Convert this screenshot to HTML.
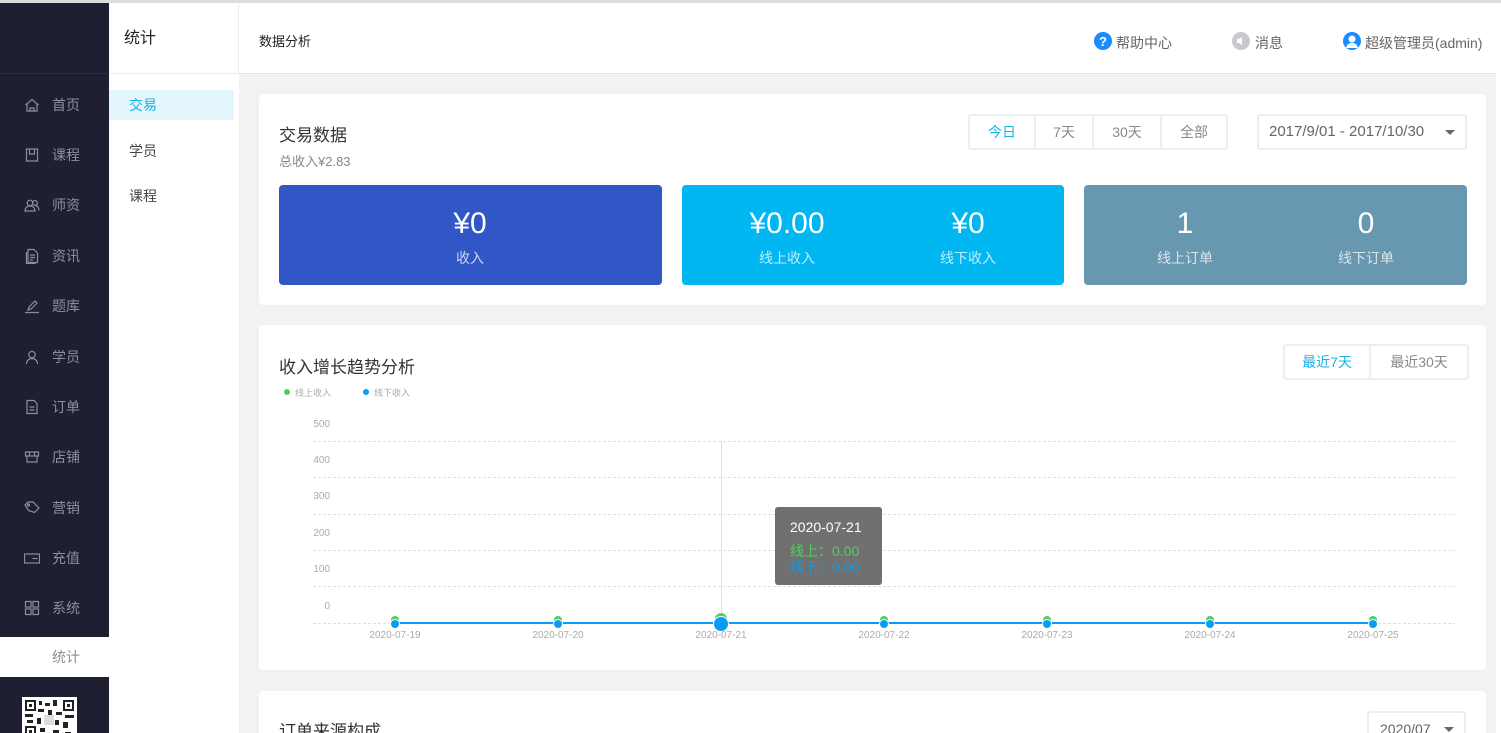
<!DOCTYPE html>
<html><head><meta charset="utf-8"><style>
*{margin:0;padding:0;box-sizing:border-box}
html,body{width:1501px;height:733px;overflow:hidden}
body{background:#f2f2f2;font-family:"Liberation Sans","Noto Sans CJK SC",sans-serif;position:relative;color:#333}
.abs{position:absolute}
.side{left:0;top:3px;width:109px;height:730px;background:#1e1f31}
.side .item{position:absolute;left:0;width:109px;height:20px;color:#8d8f99;font-size:14px}
.side .item svg{position:absolute;left:24px;top:2px}
.side .item span{position:absolute;left:52px;top:0}
.sub{left:109px;top:3px;width:130px;height:730px;background:#fff}
.hdr{left:239px;top:3px;width:1262px;height:71px;background:#fff;border-bottom:1px solid #e3e3e3}
.card{background:#fff;border-radius:4px;position:absolute;left:259px;width:1227px}
.stat{position:absolute;top:185px;height:100px;border-radius:4px;color:#fff;text-align:center}
.stat .v{position:absolute;top:22px;font-size:30px;width:200px;margin-left:-100px}
.stat .l{position:absolute;top:63px;font-size:14px;color:rgba(255,255,255,.75);width:200px;margin-left:-100px}
.btns{position:absolute;display:flex;border:2px solid #eee;border-radius:3px;height:36px}
.btns div{font-size:14px;color:#888;line-height:32px;text-align:center;border-right:2px solid #eee}
.btns div:last-child{border-right:none}
.yl{position:absolute;font-size:10px;color:#aaa;width:30px;text-align:right;left:300px}
.xl{position:absolute;font-size:10px;color:#aaa;top:630px;width:80px;text-align:center}
</style></head><body>
<div class="abs" style="left:0;top:0;width:1501px;height:3px;background:#ddd"></div>
<div class="abs side">
 <div class="abs" style="left:0;top:70px;width:109px;height:1px;background:#2c2d40"></div>
 <div class="item" style="top:92px"><svg width="16" height="16" viewBox="0 0 16 16" fill="none" stroke="#8d8f99" stroke-width="1.2"><path d="M1.5 8L8 2.5l6.5 5.5M3 7v7h10V7M6 14v-3h4v3"/></svg><span>首页</span></div>
 <div class="item" style="top:142px"><svg width="16" height="16" viewBox="0 0 16 16" fill="none" stroke="#8d8f99" stroke-width="1.2"><rect x="2.5" y="2" width="11" height="12"/><path d="M5.5 2v5h5V2"/></svg><span>课程</span></div>
 <div class="item" style="top:192px"><svg width="16" height="16" viewBox="0 0 16 16" fill="none" stroke="#8d8f99" stroke-width="1.2"><circle cx="6" cy="6" r="2.8"/><circle cx="11" cy="6" r="2.4"/><path d="M1 14c0-3 2-5 5-5s5 2 5 5zM11 8.5c2.2 0 4 1.8 4 5"/></svg><span>师资</span></div>
 <div class="item" style="top:243px"><svg width="16" height="16" viewBox="0 0 16 16" fill="none" stroke="#8d8f99" stroke-width="1.2"><path d="M4 1.5h6l3.5 3.5v9.5H4z M6 7h5M6 9.5h5M6 12h3M2.5 4v11.5h9"/></svg><span>资讯</span></div>
 <div class="item" style="top:293px"><svg width="16" height="16" viewBox="0 0 16 16" fill="none" stroke="#8d8f99" stroke-width="1.2"><path d="M1 14.5h14M4 12l1-3 6-6 2 2-6 6z"/></svg><span>题库</span></div>
 <div class="item" style="top:344px"><svg width="16" height="16" viewBox="0 0 16 16" fill="none" stroke="#8d8f99" stroke-width="1.2"><circle cx="8" cy="5.5" r="3.2"/><path d="M2.5 15c0-3.5 2.5-5.5 5.5-5.5s5.5 2 5.5 5.5"/></svg><span>学员</span></div>
 <div class="item" style="top:394px"><svg width="16" height="16" viewBox="0 0 16 16" fill="none" stroke="#8d8f99" stroke-width="1.2"><path d="M3 1.5h7l3 3v10H3z M5.5 8h5M5.5 11h5"/></svg><span>订单</span></div>
 <div class="item" style="top:444px"><svg width="16" height="16" viewBox="0 0 16 16" fill="none" stroke="#8d8f99" stroke-width="1.2"><path d="M1.5 3h13v4h-13zM3 7v6h10V7M5.5 3v4M10.5 3v4"/></svg><span>店铺</span></div>
 <div class="item" style="top:495px"><svg width="16" height="16" viewBox="0 0 16 16" fill="none" stroke="#8d8f99" stroke-width="1.2"><path d="M1 5l3-3h5l6 6-4.5 4.5-6-2z"/><circle cx="4.5" cy="5" r="1"/></svg><span>营销</span></div>
 <div class="item" style="top:545px"><svg width="16" height="16" viewBox="0 0 16 16" fill="none" stroke="#8d8f99" stroke-width="1.2"><rect x="0.5" y="4" width="15" height="9"/><path d="M8.5 8.5h5"/></svg><span>充值</span></div>
 <div class="item" style="top:595px"><svg width="16" height="16" viewBox="0 0 16 16" fill="none" stroke="#8d8f99" stroke-width="1.2"><rect x="1.5" y="1.5" width="5.5" height="5.5"/><rect x="9" y="1.5" width="5.5" height="5.5"/><rect x="1.5" y="9" width="5.5" height="5.5"/><rect x="9" y="9" width="5.5" height="5.5"/></svg><span>系统</span></div>
 <div class="abs" style="left:0;top:634px;width:109px;height:40px;background:#fff;color:#8d8f99;font-size:14px;line-height:40px;padding-left:52px">统计</div>
 <div class="abs" style="left:22px;top:694px;width:55px;height:40px;background:#fff;padding:3px">
  <svg width="49" height="37" viewBox="0 0 49 37"><g fill="#222"><rect x="0" y="0" width="11" height="11"/><rect x="38" y="0" width="11" height="11"/><rect x="0" y="26" width="11" height="11"/></g><g fill="#fff"><rect x="2" y="2" width="7" height="7"/><rect x="40" y="2" width="7" height="7"/><rect x="2" y="28" width="7" height="7"/></g><g fill="#222"><rect x="4" y="4" width="3" height="3"/><rect x="42" y="4" width="3" height="3"/><rect x="4" y="30" width="3" height="3"/><rect x="14" y="1" width="3" height="4"/><rect x="20" y="3" width="5" height="3"/><rect x="28" y="0" width="4" height="6"/><rect x="13" y="9" width="6" height="3"/><rect x="23" y="10" width="4" height="5"/><rect x="31" y="12" width="6" height="3"/><rect x="0" y="14" width="8" height="3"/><rect x="40" y="15" width="9" height="3"/><rect x="12" y="18" width="4" height="6"/><rect x="30" y="20" width="4" height="5"/><rect x="38" y="22" width="5" height="6"/><rect x="2" y="20" width="6" height="3"/><rect x="15" y="28" width="5" height="4"/><rect x="28" y="30" width="6" height="5"/><rect x="40" y="32" width="6" height="4"/></g><rect x="19" y="15" width="10" height="10" fill="#ddd"/></svg></div>
</div>
<div class="abs sub">
 <div class="abs" style="left:0;top:0;width:130px;height:71px;border-bottom:1px solid #eee;border-right:1px solid #eee;font-size:16px;line-height:71px;padding-left:15px;color:#222">统计</div>
 <div class="abs" style="left:0;top:87px;width:125px;height:30px;background:#e2f6fc;color:#17b3e8;font-size:14px;line-height:30px;padding-left:20px">交易</div>
 <div class="abs" style="left:20px;top:138px;font-size:14px;color:#444">学员</div>
 <div class="abs" style="left:20px;top:183px;font-size:14px;color:#444">课程</div>
</div>
<div class="abs hdr">
 <div class="abs" style="left:20px;top:28px;font-size:13px;color:#222">数据分析</div>
 <svg class="abs" style="left:855px;top:29px" width="18" height="18" viewBox="0 0 18 18"><circle cx="9" cy="9" r="9" fill="#1a8cff"/><text x="9" y="14" text-anchor="middle" font-size="13" font-weight="bold" fill="#fff" font-family="Liberation Sans">?</text></svg>
 <div class="abs" style="left:877px;top:30px;font-size:14px;color:#666">帮助中心</div>
 <svg class="abs" style="left:993px;top:29px" width="18" height="18"><circle cx="9" cy="9" r="9" fill="#c8c9cc"/><path d="M5 7h2l3-2v8l-3-2H5z" fill="#fff"/></svg>
 <div class="abs" style="left:1016px;top:30px;font-size:14px;color:#666">消息</div>
 <svg class="abs" style="left:1104px;top:29px" width="18" height="18"><circle cx="9" cy="9" r="9" fill="#1a8cff"/><circle cx="9" cy="7" r="3.5" fill="#fff"/><path d="M3 16c1-4 3-5 6-5s5 1 6 5z" fill="#fff"/></svg>
 <div class="abs" style="left:1126px;top:30px;font-size:14px;color:#666">超级管理员(admin)</div>
</div>
<div class="abs" style="left:1496px;top:3px;width:5px;height:730px;background:#fff"></div>

<div class="card" style="top:94px;height:211px">
 <div class="abs" style="left:20px;top:27px;font-size:17px;color:#333">交易数据</div>
 <div class="abs" style="left:20px;top:57px;font-size:13px;color:#888">总收入¥2.83</div>
 <div class="btns" style="left:709px;top:20px"><div style="width:66px;color:#17b3e8">今日</div><div style="width:58px">7天</div><div style="width:68px">30天</div><div style="width:64px">全部</div></div>
 <div class="btns" style="left:998px;top:20px;width:210px;padding-left:10px;font-size:15px;color:#666;line-height:32px">2017/9/01 - 2017/10/30<span style="position:absolute;right:10px;top:14px;border:5px solid transparent;border-top-color:#666;border-bottom:0"></span></div>
</div>
<div class="stat" style="left:279px;width:383px;background:#3157c7"><div class="v" style="left:191px">¥0</div><div class="l" style="left:191px">收入</div></div>
<div class="stat" style="left:682px;width:382px;background:#00b7f1"><div class="v" style="left:105px">¥0.00</div><div class="l" style="left:105px">线上收入</div><div class="v" style="left:286px">¥0</div><div class="l" style="left:286px">线下收入</div></div>
<div class="stat" style="left:1084px;width:383px;background:#6897b0"><div class="v" style="left:101px">1</div><div class="l" style="left:101px">线上订单</div><div class="v" style="left:282px">0</div><div class="l" style="left:282px">线下订单</div></div>

<div class="card" style="top:325px;height:345px">
 <div class="abs" style="left:20px;top:28px;font-size:17px;color:#333">收入增长趋势分析</div>
 <div class="btns" style="left:1024px;top:19px"><div style="width:86px;color:#17b3e8">最近7天</div><div style="width:96px">最近30天</div></div>
 <div class="abs" style="left:25px;top:64px;width:6px;height:6px;border-radius:50%;background:#4cd15f"></div>
 <div class="abs" style="left:36px;top:61px;font-size:9px;color:#aaa">线上收入</div>
 <div class="abs" style="left:104px;top:64px;width:6px;height:6px;border-radius:50%;background:#0a9cf5"></div>
 <div class="abs" style="left:115px;top:61px;font-size:9px;color:#aaa">线下收入</div>
</div>
<div class="yl" style="top:419px;">500</div><div class="yl" style="top:455px">400</div><div class="yl" style="top:491px">300</div><div class="yl" style="top:528px">200</div><div class="yl" style="top:564px">100</div><div class="yl" style="top:601px">0</div>
<svg class="abs" style="left:0;top:0" width="1501" height="733">
 <g stroke="#e0e0e0" stroke-dasharray="3,2" stroke-width="1">
  <line x1="313" y1="441.5" x2="1455" y2="441.5"/><line x1="313" y1="477.5" x2="1455" y2="477.5"/><line x1="313" y1="514.5" x2="1455" y2="514.5"/><line x1="313" y1="550.5" x2="1455" y2="550.5"/><line x1="313" y1="586.5" x2="1455" y2="586.5"/><line x1="313" y1="623.5" x2="1455" y2="623.5"/>
 </g>
 <line x1="721.5" y1="441" x2="721.5" y2="623" stroke="#e0e0e0"/>
 <line x1="395" y1="623" x2="1373" y2="623" stroke="#0a9cf5" stroke-width="2"/>
 <g fill="#4cd15f"><circle cx="395" cy="620" r="4"/><circle cx="558" cy="620" r="4"/><circle cx="721" cy="619" r="6"/><circle cx="884" cy="620" r="4"/><circle cx="1047" cy="620" r="4"/><circle cx="1210" cy="620" r="4"/><circle cx="1373" cy="620" r="4"/></g>
 <g fill="#0a9cf5" stroke="#fff" stroke-width="1"><circle cx="395" cy="624" r="4.5"/><circle cx="558" cy="624" r="4.5"/><circle cx="721" cy="624" r="7.5"/><circle cx="884" cy="624" r="4.5"/><circle cx="1047" cy="624" r="4.5"/><circle cx="1210" cy="624" r="4.5"/><circle cx="1373" cy="624" r="4.5"/></g>
</svg>
<div class="xl" style="left:355px">2020-07-19</div><div class="xl" style="left:518px">2020-07-20</div><div class="xl" style="left:681px">2020-07-21</div><div class="xl" style="left:844px">2020-07-22</div><div class="xl" style="left:1007px">2020-07-23</div><div class="xl" style="left:1170px">2020-07-24</div><div class="xl" style="left:1333px">2020-07-25</div>
<div class="abs" style="left:775px;top:507px;width:107px;height:78px;background:rgba(80,80,80,.82);border-radius:3px;padding:10px 15px;font-size:14px;line-height:20px">
 <div style="color:#fff;margin-bottom:4px">2020-07-21</div>
 <div style="color:#4cd15f">线上：0.00</div>
 <div style="color:#0a9cf5;margin-top:-4px">线下：0.00</div>
</div>

<div class="card" style="top:691px;height:60px">
 <div class="abs" style="left:20px;top:26px;font-size:17px;color:#333">订单来源构成</div>
 <div class="btns" style="left:1108px;top:20px;width:99px;padding-left:11px;font-size:14px;color:#666;line-height:32px">2020/07<span style="position:absolute;right:10px;top:14px;border:5px solid transparent;border-top-color:#666;border-bottom:0"></span></div>
</div>
</body></html>
